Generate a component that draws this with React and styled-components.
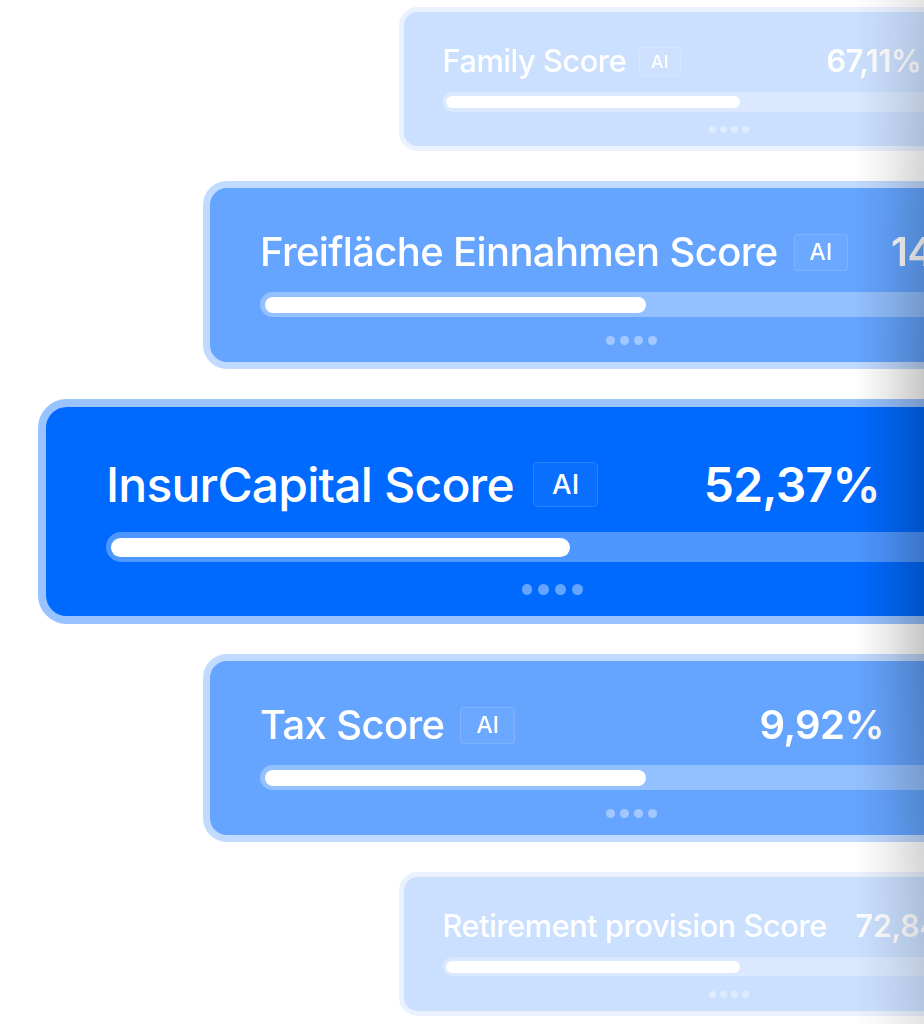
import React from 'react'
import styled, { createGlobalStyle } from 'styled-components'

const GlobalStyle = createGlobalStyle`
    html, body {
        margin: 0;
        padding: 0;
        background: #ffffff;
    }
    body {
        font-family: Inter, "Noto Sans", "Liberation Sans", sans-serif;
        -webkit-font-smoothing: antialiased;
    }
`

const scores = [
    { title: 'Family Score', value: '67,11%', ai: true, s: 0.77, fade: 0.2, indent: 399, head: 622 },
    { title: 'Freifläche Einnahmen Score', value: '14,56%', ai: true, s: 1, fade: 0.6, indent: 203, head: 773 },
    { title: 'InsurCapital Score', value: '52,37%', ai: true, s: 1.2, fade: 1, indent: 38, head: 645 },
    { title: 'Tax Score', value: '9,92%', ai: true, s: 1, fade: 0.6, indent: 203, head: 624 },
    { title: 'Retirement provision Score', value: '72,84%', ai: false, s: 0.77, fade: 0.2, indent: 399, head: 685 },
]

function ScoreCard({ score }) {
    return (
        <Card $s={score.s} $fade={score.fade} $indent={score.indent}>
            <Head $w={score.head}>
                <Title>{score.title}</Title>
                {score.ai && <Badge>AI</Badge>}
                <Value>{score.value}</Value>
            </Head>
            <Track>
                <Fill />
            </Track>
            <Dots>
                <Dot /><Dot /><Dot /><Dot />
            </Dots>
        </Card>
    )
}

export default function App() {
    return (
        <Page>
            <GlobalStyle />
            <Stack>
                {scores.map(score => (
                    <ScoreCard key={score.title} score={score} />
                ))}
            </Stack>
            <EdgeFade />
        </Page>
    )
}

const Page = styled.div`
    position: relative;
    width: 924px;
    height: 1024px;
    overflow: hidden;
    background: #ffffff;
`

const Stack = styled.div`
    display: flex;
    flex-direction: column;
    gap: 30px;
    padding-top: 7px;
`

const Card = styled.div`
    --s: ${p => p.$s};
    flex: none;
    box-sizing: border-box;
    width: calc(857px * var(--s));
    margin-left: ${p => p.$indent}px;
    padding: calc(40.5px * var(--s)) calc(50px * var(--s)) calc(17px * var(--s));
    border: calc(7px * var(--s)) solid #99c3ff;
    border-radius: calc(24px * var(--s));
    background: #006aff;
    opacity: ${p => p.$fade};
    color: #ffffff;
    display: flex;
    flex-direction: column;
`

const Head = styled.div`
    width: calc(${p => p.$w}px * var(--s));
    height: calc(48px * var(--s));
    display: flex;
    align-items: center;
`

const Title = styled.span`
    font-size: calc(40px * var(--s));
    line-height: calc(48px * var(--s));
    font-weight: 500;
    letter-spacing: -0.016em;
    white-space: nowrap;
`

const Badge = styled.span`
    margin-left: calc(16px * var(--s));
    box-sizing: border-box;
    height: calc(37px * var(--s));
    padding: 0 calc(15px * var(--s));
    display: flex;
    align-items: center;
    border: calc(1.5px * var(--s)) solid rgba(255, 255, 255, 0.13);
    border-radius: calc(4px * var(--s));
    background: rgba(255, 255, 255, 0.04);
    font-size: calc(23px * var(--s));
    font-weight: 500;
`

const Value = styled.span`
    margin-left: auto;
    font-size: calc(40px * var(--s));
    line-height: calc(48px * var(--s));
    font-weight: 600;
    letter-spacing: -0.015em;
    white-space: nowrap;
`

const Track = styled.div`
    margin-top: calc(16px * var(--s));
    box-sizing: border-box;
    height: calc(25px * var(--s));
    padding: calc(4.5px * var(--s));
    border-radius: calc(12.5px * var(--s));
    background: rgba(255, 255, 255, 0.3);
`

const Fill = styled.div`
    width: 52%;
    height: 100%;
    border-radius: calc(8px * var(--s));
    background: #ffffff;
`

const Dots = styled.div`
    margin-top: calc(18.5px * var(--s));
    display: flex;
    justify-content: center;
    gap: calc(5px * var(--s));
`

const Dot = styled.span`
    width: calc(9px * var(--s));
    height: calc(9px * var(--s));
    border-radius: 50%;
    background: rgba(255, 255, 255, 0.4);
`

const EdgeFade = styled.div`
    position: absolute;
    top: 0;
    right: 0;
    bottom: 0;
    width: 70px;
    pointer-events: none;
    background: linear-gradient(90deg, rgba(0, 0, 0, 0) 0%, rgba(0, 0, 0, 0.08) 45%, rgba(0, 0, 0, 0.22) 100%);
    -webkit-mask-image: linear-gradient(180deg, rgba(0, 0, 0, 0.5) 0%, #000 35%, #000 65%, rgba(0, 0, 0, 0.5) 100%);
    mask-image: linear-gradient(180deg, rgba(0, 0, 0, 0.5) 0%, #000 35%, #000 65%, rgba(0, 0, 0, 0.5) 100%);
`
